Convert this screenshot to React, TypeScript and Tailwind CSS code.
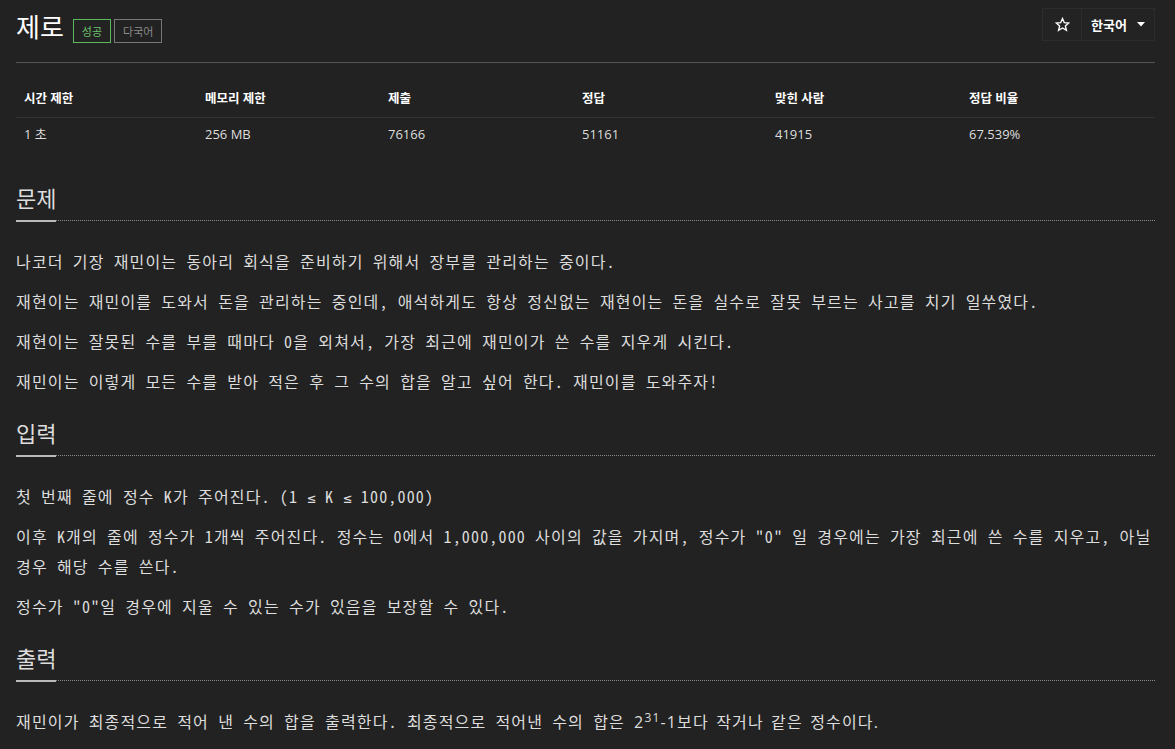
import React from "react";

const mono = "font-['Noto_Sans_Mono_CJK_KR','Noto_Sans_Mono_CJK_SC','Noto_Sans_CJK_KR',monospace]";

function Heading({ title }: { title: string }) {
  return (
    <div className="flex tracking-normal">
      <span className="border-b-2 border-[#bbbbbb] pt-[14px] pb-[11px] text-[22px] leading-[24px] text-[#dddddd] font-['Noto_Sans_CJK_KR',sans-serif]">
        {title}
      </span>
      <div className="h-[2px] flex-1 self-end border-t border-dotted border-[#8a8a8a]" />
    </div>
  );
}

function P({ children }: { children: React.ReactNode }) {
  return <p className="mb-[10px] break-keep leading-[30px] tracking-[1.16px]">{children}</p>;
}

function Le() {
  return <span className="font-['DejaVu_Sans_Mono',monospace] text-[14px] leading-[0] tracking-normal">≤</span>;
}

export default function App() {
  const heads = ["시간 제한", "메모리 제한", "제출", "정답", "맞힌 사람", "정답 비율"];
  const vals = ["1 초", "256 MB", "76166", "51161", "41915", "67.539%"];
  const widths = ["w-[181px]", "w-[183px]", "w-[194px]", "w-[193px]", "w-[194px]", ""];
  return (
    <div className="min-h-screen bg-[#222222] pl-4 pr-5 pb-4 text-[#dddddd]">
      <header className="flex h-[63px] items-start justify-between border-b border-[#555555]">
        <div className="flex items-start pt-[11px]">
          <h1 className="text-[26px] leading-[30px] text-white font-['Noto_Sans_CJK_KR',sans-serif]">제로</h1>
          <span className="ml-[9px] mt-[8px] flex h-[24px] items-center border border-[#5cb85c] px-[8px] text-[11px] text-[#6cc06c] font-['Noto_Sans_CJK_KR',sans-serif]">
            성공
          </span>
          <span className="ml-[3px] mt-[8px] flex h-[24px] items-center border border-[#777777] px-[8px] text-[11px] text-[#8a8a8a] font-['Noto_Sans_CJK_KR',sans-serif]">
            다국어
          </span>
        </div>
        <div className="mt-[8px] flex h-[33px] border border-[#2c2c2c] bg-[#232323]">
          <div className="flex w-[39px] items-center justify-center border-r border-[#2c2c2c]">
            <svg width="15" height="15" viewBox="0 0 24 24" fill="none" stroke="white" strokeWidth="2.2" strokeLinejoin="miter">
              <polygon points="12,2.5 14.9,9.1 22,9.6 16.6,14.3 18.3,21.3 12,17.5 5.7,21.3 7.4,14.3 2,9.6 9.1,9.1" />
            </svg>
          </div>
          <div className="flex items-center gap-[10px] pl-[9px] pr-[9px] text-[13px] font-bold text-white font-['Noto_Sans_CJK_KR',sans-serif]">
            <span>한국어</span>
            <svg width="8" height="5" viewBox="0 0 8 5">
              <polygon points="0,0 8,0 4,4.5" fill="white" />
            </svg>
          </div>
        </div>
      </header>

      <table className="mt-5 w-full border-collapse font-['Open_Sans','Noto_Sans_CJK_KR',sans-serif] text-[13px]">
        <thead>
          <tr className="h-[34px] border-b border-[#333333]">
            {heads.map((h, i) => (
              <th key={h} className={`${widths[i]} px-2 text-left text-[12.5px] font-bold text-white`}>
                {h}
              </th>
            ))}
          </tr>
        </thead>
        <tbody>
          <tr className="h-[35px]">
            {vals.map((v) => (
              <td key={v} className="px-2 text-[#dddddd]">
                {v}
              </td>
            ))}
          </tr>
        </tbody>
      </table>

      <div className={`${mono} text-[16px] text-[#dddddd]`}>
        <section className="mt-[19px]">
          <Heading title="문제" />
          <div className="pt-[24px]">
            <P>나코더 기장 재민이는 동아리 회식을 준비하기 위해서 장부를 관리하는 중이다.</P>
            <P>재현이는 재민이를 도와서 돈을 관리하는 중인데, 애석하게도 항상 정신없는 재현이는 돈을 실수로 잘못 부르는 사고를 치기 일쑤였다.</P>
            <P>재현이는 잘못된 수를 부를 때마다 0을 외쳐서, 가장 최근에 재민이가 쓴 수를 지우게 시킨다.</P>
            <P>재민이는 이렇게 모든 수를 받아 적은 후 그 수의 합을 알고 싶어 한다. 재민이를 도와주자!</P>
          </div>
        </section>
        <section>
          <Heading title="입력" />
          <div className="pt-[24px]">
            <P>
              첫 번째 줄에 정수 K가 주어진다. (1 <Le /> K <Le /> 100,000)
            </P>
            <P>이후 K개의 줄에 정수가 1개씩 주어진다. 정수는 0에서 1,000,000 사이의 값을 가지며, 정수가 "0" 일 경우에는 가장 최근에 쓴 수를 지우고, 아닐 경우 해당 수를 쓴다.</P>
            <P>정수가 "0"일 경우에 지울 수 있는 수가 있음을 보장할 수 있다.</P>
          </div>
        </section>
        <section>
          <Heading title="출력" />
          <div className="pt-[24px]">
            <P>
              재민이가 최종적으로 적어 낸 수의 합을 출력한다. 최종적으로 적어낸 수의 합은{" "}
              <span className="font-['Open_Sans','Noto_Sans_CJK_KR',sans-serif] [word-spacing:2px]">
                2<sup>31</sup>-1보다 작거나 같은 정수이다.
              </span>
            </P>
          </div>
        </section>
      </div>
    </div>
  );
}
